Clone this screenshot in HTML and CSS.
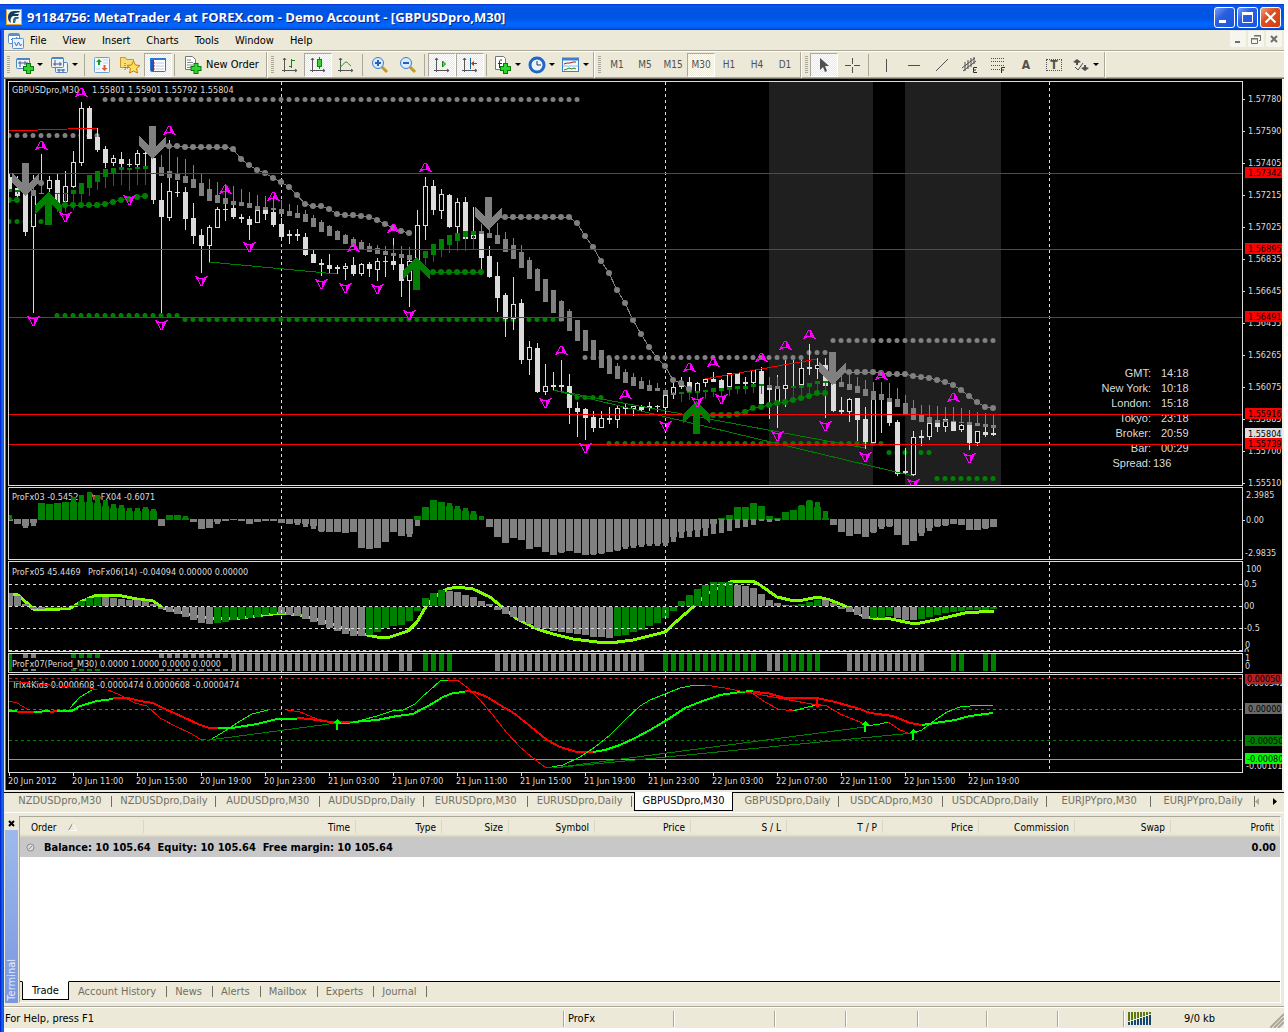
FILE: index.html
```html
<!DOCTYPE html>
<html lang="en">
<head>
<meta charset="utf-8">
<title>MetaTrader 4 at FOREX.com</title>
<link rel="stylesheet" href="styles.css">
</head>
<body>
<div class="window">
  <header class="titlebar">
    <svg class="app-icon" width="16" height="16" viewBox="0 0 16 16"><rect width="16" height="16" fill="#f0a030"/><rect x="1" y="1" width="14" height="14" fill="#f4f8f4"/><path d="M14 2H8C4 2 2 5 2 8s1 5 3 6c-1-4 0-6 2-7h5l1-2H8c1-1 3-1.500 5-1.500z" fill="#123c58"/><path d="M7 14c0-3 0-5 2-6h4l-1 2h-2l-1 4z" fill="#2a6a88"/></svg>
    <h1>91184756: MetaTrader 4 at FOREX.com - Demo Account - [GBPUSDpro,M30]</h1>
    <div class="caption-buttons">
      <button class="cap" aria-label="Minimize"><svg width="19" height="19"><rect x="4" y="12" width="7" height="3" fill="#fff"/></svg></button>
      <button class="cap" aria-label="Maximize"><svg width="19" height="19"><path d="M4.500 5v9.500h10V5" fill="none" stroke="#fff"/><rect x="4" y="4" width="11" height="3" fill="#fff"/></svg></button>
      <button class="cap cap-close" aria-label="Close"><svg width="19" height="19"><path d="M4.500 4.500l10 10M14.500 4.500l-10 10" stroke="#fff" stroke-width="2"/></svg></button>
    </div>
  </header>

  <nav class="menubar">
    <svg class="menu-icon" width="16" height="16" viewBox="0 0 16 16"><rect x=".5" y=".5" width="11" height="10" rx="1" fill="#fff" stroke="#5b8fd0"/><path d="M1 2h10" stroke="#5b8fd0" stroke-width="2"/><path d="M3 7l2-2 2 2 2-3" fill="none" stroke="#3a70c0"/><rect x="4.500" y="5.500" width="11" height="10" rx="1" fill="#eaf4ff" stroke="#5b8fd0"/><path d="M6.500 9l2 4 2-4 2 4 1-2" fill="none" stroke="#3a70c0"/></svg>
    <button>File</button><button>View</button><button>Insert</button><button>Charts</button><button>Tools</button><button>Window</button><button>Help</button>
    <div class="mdi-buttons">
      <button aria-label="Minimize chart"><svg width="14" height="14"><path d="M4 10h5" stroke="#716f64" stroke-width="2"/></svg></button>
      <button aria-label="Restore chart"><svg width="14" height="14"><path d="M5.500 4V3.500h6v5H10M2.500 6.500h6v5h-6z M5 4h7M2 7h7" fill="none" stroke="#716f64"/></svg></button>
      <button aria-label="Close chart"><svg width="14" height="14"><path d="M4 4l6 6M10 4l-6 6" stroke="#716f64" stroke-width="2"/></svg></button>
    </div>
  </nav>

  <div class="toolbars">
    <div class="toolbar">
      <button class="tool tool-drop" aria-label="New chart"><svg width="18" height="18"><rect x=".5" y="2.500" width="13" height="10" rx="1" fill="#eaf4ff" stroke="#4a86c8"/><path d="M1 3h13" stroke="#4a86c8" stroke-width="2"/><path d="M2 7h10M4 5v6M9 5v4" stroke="#557"/><path d="M12.500 7v11M7 12.500h11" stroke="#067a06" stroke-width="5"/><path d="M12.500 8v9M8 12.500h9" stroke="#2fd52f" stroke-width="3"/></svg></button>
      <button class="tool tool-drop" aria-label="Profiles"><svg width="18" height="18"><rect x="4.500" y="6.500" width="12" height="10" rx="1" fill="#eaf4ff" stroke="#4a86c8"/><path d="M6 14h8M8 13v3M12 13v3" stroke="#557"/><rect x=".5" y="1.500" width="12" height="10" rx="1" fill="#eaf4ff" stroke="#4a86c8"/><path d="M1 2h11" stroke="#4a86c8" stroke-width="2"/><path d="M2 8h9M4 4v6M9 6v4" stroke="#557"/></svg></button>
      <span class="sep"></span>
      <button class="tool" aria-label="Market Watch"><svg width="18" height="18"><rect x="1.500" y="1.500" width="15" height="15" rx="1" fill="#f2f8ff" stroke="#6aa0d8"/><path d="M10 4h5M10 7h5M3 13h4" stroke="#b8d4f0"/><path d="M6 3l3 3H7v3H5V6H3z" fill="#0aa50a"/><path d="M11.500 15l3-3h-2V9h-2v3h-2z" fill="#e05a28"/></svg></button>
      <button class="tool" aria-label="Navigator"><svg width="20" height="18"><path d="M.5 1.500h5l1 2h7v8h-13z" fill="#f8dc78" stroke="#c89820"/><path d="M5 7v8M5 12h4" stroke="#666" stroke-dasharray="1 1"/><path d="M13.500 5l2 4 4.500.5-3.500 3 1 4.500-4-2-4 2 1-4.500-3.500-3 4.500-.5z" fill="#ffe060" stroke="#c08010"/></svg></button>
      <button class="tool tool-on" aria-label="Terminal" aria-pressed="true"><svg width="18" height="16"><rect x="1.500" y="1.500" width="15" height="13" rx="1" fill="#fff" stroke="#2f78d0"/><path d="M1 2h16" stroke="#2f78d0" stroke-width="2"/><path d="M3.500 3v11" stroke="#2a50b0" stroke-width="3"/><path d="M7 6h8M7 9h8M7 12h8" stroke="#b8c8e8"/><path d="M5 6h1M5 9h1M5 12h1" stroke="#d02020"/></svg></button>
      <span class="sep"></span>
      <button class="tool tool-text"><svg width="18" height="18"><path d="M1.500.5h7l3 3v10h-10z" fill="#fff" stroke="#777"/><path d="M3 4h4M3 6.500h6M3 9h6M3 11.500h4" stroke="#888"/><path d="M12 7v11M6.500 12.500h11" stroke="#067a06" stroke-width="5"/><path d="M12 8v9M7.500 12.500h9" stroke="#2fd52f" stroke-width="3"/></svg>New Order</button>
    </div>
    <div class="toolbar">
      <button class="tool" aria-label="Bar chart"><svg width="16" height="16"><path d="M2.500 1v14M0 13.500h15M1 3l1.500-2L4 3M13 12l2 1.500-2 1.500" fill="none" stroke="#555"/><path d="M9.500 2v9M7 9.500h2M10 3.500h3" stroke="#0a8a0a"/></svg></button>
      <button class="tool tool-on" aria-label="Candlesticks" aria-pressed="true"><svg width="16" height="16"><path d="M2.500 1v14M0 13.500h15M1 3l1.500-2L4 3M13 12l2 1.500-2 1.500" fill="none" stroke="#555"/><path d="M9.500 0v12" stroke="#078a07"/><rect x="7.500" y="2.500" width="4" height="7" fill="#2fd52f" stroke="#078a07"/></svg></button>
      <button class="tool" aria-label="Line chart"><svg width="16" height="16"><path d="M2.500 1v14M0 13.500h15M1 3l1.500-2L4 3M13 12l2 1.500-2 1.500" fill="none" stroke="#555"/><path d="M2 10c3-1 4-5 6-5s3 3 5 4" fill="none" stroke="#2a9a2a"/></svg></button>
      <span class="sep"></span>
      <button class="tool" aria-label="Zoom in"><svg width="18" height="18"><path d="M11 11l5 5" stroke="#c89820" stroke-width="3"/><circle cx="7" cy="7" r="5.500" fill="#d8ecff" stroke="#3a7cd0"/><path d="M4 7h6M7 4v6" stroke="#2a60b0" stroke-width="2"/></svg></button>
      <button class="tool" aria-label="Zoom out"><svg width="18" height="18"><path d="M11 11l5 5" stroke="#c89820" stroke-width="3"/><circle cx="7" cy="7" r="5.500" fill="#d8ecff" stroke="#3a7cd0"/><path d="M4 7h6" stroke="#2a60b0" stroke-width="2"/></svg></button>
      <span class="sep"></span>
      <button class="tool tool-on" aria-label="Auto scroll" aria-pressed="true"><svg width="16" height="16"><path d="M2.500 1v14M0 13.500h15M1 3l1.500-2L4 3M13 12l2 1.500-2 1.500" fill="none" stroke="#555"/><path d="M8.500 4l3 3-3 3z" fill="#5be05b" stroke="#0a8a0a"/></svg></button>
      <button class="tool tool-on" aria-label="Chart shift" aria-pressed="true"><svg width="16" height="16"><path d="M2.500 1v14M0 13.500h15M1 3l1.500-2L4 3M13 12l2 1.500-2 1.500" fill="none" stroke="#555"/><path d="M8.500 1v11" stroke="#1a6090"/><path d="M9 6.500l3-2.500v2h3v1h-3v2z" fill="#b83010"/></svg></button>
      <span class="sep"></span>
      <button class="tool tool-drop tool-snug" aria-label="Indicators"><svg width="18" height="18"><path d="M1.500.5h8l2 2v11h-10z" fill="#fff" stroke="#777"/><path d="M8 4H6.500Q5.500 4 5.500 6v6M4 7.500h4" fill="none" stroke="#333"/><path d="M11.500 7v11M6 12.500h11" stroke="#067a06" stroke-width="5"/><path d="M11.500 8v9M7 12.500h9" stroke="#2fd52f" stroke-width="3"/></svg></button>
      <button class="tool tool-drop tool-snug" aria-label="Periods"><svg width="18" height="18"><circle cx="9" cy="9" r="7" fill="#eaf4ff" stroke="#1f66c8" stroke-width="3"/><path d="M9 5v4h4" fill="none" stroke="#333"/></svg></button>
      <button class="tool tool-drop tool-snug" aria-label="Templates"><svg width="18" height="16"><rect x=".5" y="1.500" width="16" height="13" fill="#f4faff" stroke="#3f80c8"/><path d="M0 2h17" stroke="#3f80c8" stroke-width="3"/><path d="M1 9h15" stroke="#9abce0"/><path d="M2 7l3-1 3 0 3-1 3 0" fill="none" stroke="#a02020"/><path d="M2 13l3-1 2-1 3 1 2-1 2 1" fill="none" stroke="#1a8a1a"/></svg></button>
    </div>
    <div class="toolbar">
      <button class="tool">M1</button><button class="tool">M5</button><button class="tool">M15</button><button class="tool tool-on" aria-pressed="true">M30</button><button class="tool">H1</button><button class="tool">H4</button><button class="tool">D1</button>
    </div>
    <div class="toolbar">
      <button class="tool tool-on" aria-label="Cursor" aria-pressed="true"><svg width="16" height="16"><path d="M4 1v12l3-3 2 5 2-1-2-5h4z" fill="#505050"/></svg></button>
      <button class="tool" aria-label="Crosshair"><svg width="16" height="16"><path d="M8.500 1v6M8.500 10v6M1 8.500h6M10 8.500h6" stroke="#505050"/></svg></button>
      <span class="sep"></span>
      <button class="tool" aria-label="Vertical line"><svg width="16" height="16"><path d="M8.500 2v13" stroke="#505050"/></svg></button>
      <button class="tool" aria-label="Horizontal line"><svg width="16" height="16"><path d="M2 8.500h12" stroke="#505050"/></svg></button>
      <button class="tool" aria-label="Trendline"><svg width="16" height="16"><path d="M2 14L14 2" stroke="#505050"/></svg></button>
      <button class="tool" aria-label="Channel"><svg width="18" height="18"><path d="M1 12L14 2M2 15L15 5M4 6v9M7 4v9M10 2v9M13 1v7" stroke="#505050"/><path d="M16 11.500h-3.500v5H16M12.500 14H15" fill="none" stroke="#303030"/></svg></button>
      <button class="tool" aria-label="Fibonacci"><svg width="18" height="18"><path d="M2 2.500h14M2 5.500h14M2 9.500h14M2 13.500h9" stroke="#505050" stroke-dasharray="1 1"/><path d="M16 11.500h-3.500v5.500M12.500 14H15" fill="none" stroke="#303030"/></svg></button>
      <button class="tool tool-letter">A</button>
      <button class="tool tool-letter tool-boxed">T</button>
      <button class="tool tool-drop" aria-label="Arrows"><svg width="18" height="16"><path d="M1 5l4-3 4 3-3 1v2H4V6zM9 11l4 3 4-3-3-1V8h-2v2z" fill="#505050"/><path d="M3 10l3 3 5-7" fill="none" stroke="#505050"/></svg></button>
    </div>
  </div>

  <main class="chart">
    <div class="pane pane-price"><svg class="plot" id="price-plot"></svg><svg class="axis" id="price-axis"></svg></div>
    <div class="pane pane-osc"><svg class="plot" id="osc-plot"></svg><svg class="axis" id="osc-axis"></svg></div>
    <div class="pane pane-trend"><svg class="plot" id="trend-plot"></svg><svg class="axis" id="trend-axis"></svg></div>
    <div class="pane pane-flags"><svg class="plot" id="flags-plot"></svg><svg class="axis" id="flags-axis"></svg></div>
    <div class="pane pane-trix"><svg class="plot" id="trix-plot"></svg><svg class="axis" id="trix-axis"></svg></div>
    <ol class="times">
      <li>20 Jun 2012</li><li>20 Jun 11:00</li><li>20 Jun 15:00</li><li>20 Jun 19:00</li><li>20 Jun 23:00</li><li>21 Jun 03:00</li><li>21 Jun 07:00</li><li>21 Jun 11:00</li><li>21 Jun 15:00</li><li>21 Jun 19:00</li><li>21 Jun 23:00</li><li>22 Jun 03:00</li><li>22 Jun 07:00</li><li>22 Jun 11:00</li><li>22 Jun 15:00</li><li>22 Jun 19:00</li>
    </ol>
  </main>

  <div class="chart-tabs">
    <button>NZDUSDpro,M30</button><button>NZDUSDpro,Daily</button><button>AUDUSDpro,M30</button><button>AUDUSDpro,Daily</button><button>EURUSDpro,M30</button><button>EURUSDpro,Daily</button><button class="current">GBPUSDpro,M30</button><button>GBPUSDpro,Daily</button><button>USDCADpro,M30</button><button>USDCADpro,Daily</button><button>EURJPYpro,M30</button><button>EURJPYpro,Daily</button>
    <div class="scrollers">
      <button aria-label="Scroll left"><svg width="5" height="7"><path d="M4 0v7L0 3.500z" fill="#aca899"/></svg></button>
      <button aria-label="Scroll right"><svg width="5" height="7"><path d="M1 0v7l4-3.500z" fill="#000"/></svg></button>
    </div>
  </div>

  <section class="terminal">
    <div class="terminal-side">
      <button aria-label="Close terminal"><svg width="7" height="7"><path d="M1 1l5 5M6 1L1 6" stroke="#000" stroke-width="2"/></svg></button>
      <div class="terminal-name"><span>Terminal</span></div>
    </div>
    <div class="terminal-main">
      <div class="orders">
        <table>
          <colgroup><col class="c-order"><col><col class="c-type"><col class="c-size"><col class="c-type"><col class="c-num"><col class="c-num"><col class="c-num"><col class="c-num"><col class="c-num"><col class="c-num"><col class="c-profit"></colgroup>
          <thead><tr><th>Order <svg width="9" height="8"><path d="M.5 7.500l4-7" stroke="#8c897a"/><path d="M4.500.5l4 7h-8" fill="none" stroke="#fff"/></svg></th><th>Time</th><th>Type</th><th>Size</th><th>Symbol</th><th>Price</th><th>S / L</th><th>T / P</th><th>Price</th><th>Commission</th><th>Swap</th><th>Profit</th></tr></thead>
          <tbody><tr><td colspan="11"><svg width="9" height="9"><circle cx="4.500" cy="4.500" r="3.500" fill="#ddd" stroke="#888"/><path d="M3 6l3-3" stroke="#888"/></svg>Balance: 10 105.64&nbsp; Equity: 10 105.64&nbsp; Free margin: 10 105.64</td><td>0.00</td></tr></tbody>
        </table>
      </div>
      <div class="terminal-tabs">
        <button class="current">Trade</button><button>Account History</button><button>News</button><button>Alerts</button><button>Mailbox</button><button>Experts</button><button>Journal</button>
      </div>
    </div>
  </section>

  <footer class="status">
    <span>For Help, press F1</span><span>ProFx</span><span></span><span></span><span></span><span></span><span></span><span></span>
    <span class="traffic"><svg width="24" height="13"><path d="M1 0v9M4 0v8M7 0v7M10 0v6M13 0v5M16 0v4M19 0v3M22 0v2" stroke="#5a7a10" stroke-width="2"/><path d="M1 13v-3M4 13v-4M7 13v-5M10 13v-6M13 13v-7M16 13v-8M19 13v-9M22 13v-10" stroke="#104870" stroke-width="2"/></svg>9/0 kb</span>
    <svg class="size-grip" width="14" height="15"><path d="M0 15L14 1M4 15L14 5M8 15L14 9" stroke="#aca899" stroke-width="2"/></svg>
  </footer>
</div>
<script src="chart.js"></script>
</body>
</html>
```

FILE: styles.css
```css
* { box-sizing: border-box; }

body {
  margin: 0;
  padding: 4px 4px 0 0;
  min-height: 100vh;
  display: flex;
  background: #fff;
  color: #000;
  font: 11px/14px "DejaVu Sans Condensed", "Liberation Sans", sans-serif;
}

button {
  margin: 0;
  padding: 0;
  border: 0;
  background: none;
  color: inherit;
  font: inherit;
}

svg { display: block; flex: none; }

.window {
  flex: 1;
  min-width: 0;
  display: flex;
  flex-direction: column;
  padding: 0 0 4px 4px;
  background: linear-gradient(90deg, #0019cf 0, #0831d9 1px, #166aee 2px, #0855dd 4px, #fff 4px);
}

.titlebar {
  display: flex;
  align-items: center;
  height: 26px;
  margin-left: -4px;
  padding: 0 3px 0 6px;
  background: linear-gradient(#0831d9 0, #0a5ae8 2px, #0054e3 6px, #0055e5 14px, #0066ff 20px, #0062f8 23px, #0040c8 26px);
}
.titlebar h1 {
  flex: 1;
  margin: 0 0 0 5px;
  color: #fff;
  font: bold 13px/18px "Open Sans", "Liberation Sans", sans-serif;
  text-shadow: 1px 1px #0a1f80;
  white-space: nowrap;
}
.caption-buttons { display: flex; gap: 2px; }
.cap {
  width: 21px;
  height: 21px;
  border: 1px solid #fff;
  border-radius: 3px;
  background: linear-gradient(135deg, #7ba0f4, #2a5ee0 40%, #1c55dc);
}
.cap-close { background: linear-gradient(135deg, #f0a080, #dc5020 40%, #d04010); }

.menubar {
  display: flex;
  align-items: center;
  height: 22px;
  padding-left: 4px;
  background: #ece9d8;
  border-bottom: 1px solid #fff;
  box-shadow: inset 0 -1px #aca899;
}
.menu-icon { margin-right: -2px; }
.menubar > button { padding: 0 8px; }
.mdi-buttons { display: flex; gap: 2px; margin: 0 2px 3px auto; }
.mdi-buttons button { width: 16px; height: 16px; padding: 1px; background: #f6f5ee; }

.toolbars {
  display: flex;
  height: 26px;
  background: #ece9d8;
  box-shadow: inset 0 -1px #aca899;
  color: #505050;
  font-size: 10px;
}
.toolbar {
  display: flex;
  align-items: center;
  padding: 0 1px 1px 0;
  border-right: 1px solid #aca899;
  box-shadow: 1px 0 #fff;
}
.toolbar + .toolbar { margin-left: 1px; }
.toolbar::before {
  content: "";
  width: 3px;
  height: 18px;
  margin: 0 2px 0 3px;
  background: repeating-linear-gradient(#aca899 0, #aca899 1px, #ece9d8 1px, #ece9d8 2px);
}
.tool {
  display: flex;
  align-items: center;
  justify-content: center;
  width: 28px;
  height: 24px;
  border: 1px solid transparent;
}
.tool-drop { width: 35px; gap: 3px; }
.tool-snug { width: 34px; }
.tool-drop::after {
  content: "";
  border: 3px solid transparent;
  border-top-color: #000;
  border-bottom: 0;
}
.tool-on {
  background: repeating-conic-gradient(#fff 0 25%, #ece9d8 0 50%) 0 0 / 2px 2px;
  border-color: #aca899 #fff #fff #aca899;
}
.tool-text { width: 87px; gap: 4px; color: #000; font-size: 11px; }
.tool-letter { font-weight: bold; font-size: 12px; }
.tool-boxed { outline: 1px dotted #505050; outline-offset: -7px; }
.sep { width: 1px; height: 22px; margin: 0 3px 0 2px; background: #aca899; }

.chart {
  display: flex;
  flex-direction: column;
  gap: 1px;
  padding: 2px 2px 0 4px;
  background: #000;
  color: #dcdcdc;
  border-top: 1px solid #716f64;
  box-shadow: inset 1px 0 #ece9d8, inset 2px 0 #716f64, inset -2px 0 #f1efe2;
  font-size: 9px;
  line-height: 10px;
}
.pane { display: flex; }
.plot { flex: 1 1 0; min-width: 0; height: 100%; border: 1px solid #dcdcdc; }
.axis { width: 39px; height: 100%; }
.pane-price { height: 405px; }
.pane-osc { height: 73px; }
.pane-trend { height: 91px; }
.pane-flags { height: 20px; }
.pane-trix { height: 99px; }
.chart text { font-size: 9px; fill: #dcdcdc; white-space: pre; }
.chart .clock { font: 11px "Liberation Sans", sans-serif; }
.chart .on-tag { fill: #000; }
.times {
  display: flex;
  height: 17px;
  margin: -1px 0 0;
  padding: 0 0 0 1px;
  list-style: none;
}
.times li {
  flex: none;
  width: 64px;
  padding-top: 3px;
  text-indent: -1px;
  white-space: nowrap;
  background: linear-gradient(#dcdcdc, #dcdcdc) 0 0 / 1px 3px no-repeat;
}

.chart-tabs {
  display: flex;
  align-items: center;
  height: 23px;
  padding: 2px 2px 2px 4px;
  background: #ece9d8;
  border-bottom: 1px solid #fff;
  box-shadow: inset 0 2px #ece9d8, inset 0 3px #000;
  color: #716f64;
}
.chart-tabs > button { position: relative; width: 104px; height: 19px; white-space: nowrap; }
.chart-tabs > button::after {
  content: "";
  position: absolute;
  right: 0;
  top: 4px;
  height: 11px;
  border-right: 1px solid #716f64;
}
.chart-tabs > .current {
  width: 100px;
  margin: 0 2px;
  background: #fff;
  color: #000;
  border: 1px solid #000;
  border-top: 0;
}
.chart-tabs > .current::after { display: none; }
.scrollers { display: flex; gap: 12px; margin: 0 5px 0 auto; }

.terminal {
  flex: 1;
  display: flex;
  padding: 3px 3px 3px 1px;
  background: #ece9d8;
}
.terminal-side { display: flex; flex-direction: column; width: 13px; margin-right: 1px; }
.terminal-side button { height: 14px; padding: 2px 3px; }
.terminal-name {
  flex: 1;
  display: flex;
  align-items: flex-end;
  background: linear-gradient(#9db9ec, #7a96df);
  color: #e4ecfb;
}
.terminal-name span { writing-mode: vertical-rl; transform: rotate(180deg); padding-top: 2px; }
.terminal-main {
  flex: 1;
  min-width: 0;
  display: flex;
  flex-direction: column;
  border: 1px solid #aca899;
  border-color: #aca899 #fff #fff #aca899;
}
.orders { flex: 1; background: #fff; border-bottom: 1px solid #000; }
.orders table { width: 100%; table-layout: fixed; border-collapse: collapse; }
.c-order { width: 124px; }
.c-type { width: 86px; }
.c-size { width: 67px; }
.c-num { width: 96px; }
.c-profit { width: 109px; }
.orders th {
  height: 20px;
  padding: 2px 6px 0;
  font-weight: normal;
  font-size: 10px;
  text-align: right;
  background: linear-gradient(90deg, #ece9d8, #c9c5b0) right 3px / 1px 13px no-repeat, linear-gradient(#ece9d8 17px, #d2cfbb 20px);
}
.orders th:first-child { text-align: left; padding-left: 11px; }
.orders th svg { display: inline-block; margin-left: 9px; }
.orders td { height: 20px; padding: 2px 4px 0; background: #c8c8c8; font-weight: bold; }
.orders td:last-child { text-align: right; }
.orders td svg { display: inline-block; margin: 0 9px 0 2px; vertical-align: -1px; }
.terminal-tabs { display: flex; height: 20px; padding-left: 2px; color: #716f64; }
.terminal-tabs button { position: relative; height: 18px; padding: 2px 11px 0 8px; }
.terminal-tabs button::after {
  content: "";
  position: absolute;
  right: 0;
  top: 4px;
  height: 11px;
  border-right: 1px solid #716f64;
}
.terminal-tabs .current {
  height: 19px;
  margin: -1px 1px 0 0;
  padding: 0 9px;
  background: #fff;
  color: #000;
  border: 1px solid #000;
  border-top-color: #fff;
}
.terminal-tabs .current::after { display: none; }

.status {
  display: grid;
  grid-template-columns: 1fr 110px 101px 71px 72px 69px 71px 66px 147px 14px;
  align-items: center;
  height: 22px;
  padding-top: 2px;
  background: #ece9d8;
  border-top: 1px solid #aca899;
  box-shadow: inset 0 1px #fff;
}
.status span { height: 16px; padding: 1px 4px; border-left: 1px solid #aca899; box-shadow: inset 1px 0 #fff; }
.status span:first-child { padding-left: 1px; border: 0; box-shadow: none; }
.status .traffic { display: flex; gap: 32px; }
.size-grip { align-self: end; }
```

FILE: chart.js
```js
const GRAY = '#808080', GREEN = '#008000', PALE = '#dcdcdc', RED = '#ff0000', LIME = '#00ff00', PINK = '#ff00ff';
const PLOT_LEFT = 9, AXIS_LEFT = 1243, STEP = 8;
const barX = i => PLOT_LEFT + STEP * i;

const rect = (x, y, w, h, fill) => `<rect x="${x}" y="${y}" width="${w}" height="${h}" fill="${fill}"/>`;
const text = (x, y, s, extra = '') => `<text x="${x}" y="${y}" ${extra}>${s}</text>`;
const line = (points, color, width = 1) =>
  `<polyline points="${points.join(' ')}" fill="none" stroke="${color}" stroke-width="${width}"/>`;
const level = (y, color) => rect(0, y, 3000, 1, color);
const dashed = (y, color) => `<path d="M9 ${y}.5H3000" stroke="${color}" stroke-dasharray="3 3"/>`;
const dayLines = () => [281, 665, 1049]
  .map(x => `<path d="M${x}.5 82V772" stroke="${PALE}" stroke-dasharray="3 3"/>`).join('');

function draw(id, left, top, parts) {
  document.getElementById(id).innerHTML =
    `<g transform="translate(${-left},${-top})" shape-rendering="crispEdges">${parts.flat().join('')}</g>`;
}

/* Candles: high, low, body top, body bottom, hollow flag */
const candles = [
[174,192,177,189,0],[176,198,188,196,0],[190,236,194,232,0],[175,313,191,227,1],[154,190,183,184,0],[176,192,180,189,1],[174,204,180,204,0],[171,204,186,202,1],
[151,188,162,187,1],[102,166,108,163,1],[106,139,108,139,0],[128,152,137,150,0],[146,168,149,163,0],[155,166,158,163,1],[152,169,159,164,0],[159,167,164,165,0],
[150,167,153,165,1],[151,166,153,154,0],[153,204,158,200,0],[183,313,200,217,0],[140,221,191,218,1],[181,197,192,193,0],[187,230,192,219,0],[203,244,218,236,0],
[229,273,235,246,0],[225,262,227,246,1],[207,228,209,228,1],[204,221,209,210,0],[205,219,208,217,0],[214,223,217,219,0],[216,240,219,225,0],[206,223,210,223,1],
[206,220,210,214,0],[206,227,212,225,0],[218,239,224,237,0],[230,244,234,236,1],[229,241,234,236,0],[233,256,237,255,0],[250,263,254,263,0],[259,276,263,265,0],
[254,273,265,269,0],[265,274,267,269,0],[263,280,266,269,1],[257,276,265,274,0],[263,276,264,274,1],[262,277,264,269,0],[258,281,261,270,1],[256,277,261,262,0],
[238,270,261,265,0],[246,297,264,281,0],[256,307,261,281,1],[210,262,225,262,1],[177,240,186,226,1],[180,215,186,210,0],[189,219,194,211,1],[194,228,195,227,0],
[198,233,202,227,1],[197,239,202,239,0],[207,239,235,239,1],[224,269,232,258,0],[246,278,256,277,0],[262,312,276,298,0],[293,337,295,319,0],[277,330,304,319,1],
[299,364,303,360,0],[341,375,347,360,1],[343,393,348,392,0],[364,395,386,392,1],[372,390,385,387,0],[360,391,385,387,0],[374,424,386,408,0],[402,437,408,412,0],
[408,440,409,418,0],[411,432,417,428,0],[411,428,418,428,1],[407,424,418,420,0],[406,428,408,420,1],[404,414,407,409,0],[406,416,406,409,1],[405,411,407,410,0],
[402,411,406,408,0],[405,412,406,407,0],[390,412,395,408,1],[379,399,387,395,1],[377,389,383,387,0],[377,390,382,390,0],[382,392,383,392,1],[379,387,379,383,1],
[372,382,379,382,0],[379,388,380,388,0],[373,387,373,387,1],[373,384,373,384,0],[377,386,382,384,0],[370,384,370,383,1],[367,404,371,404,0],[387,419,388,390,0],
[375,428,388,402,1],[360,407,385,389,1],[360,387,386,387,0],[360,387,368,385,1],[344,375,367,369,0],[358,379,365,369,1],[358,418,365,386,0],[380,412,384,411,0],
[397,414,410,412,0],[398,422,399,412,1],[398,441,398,420,0],[407,449,419,442,0],[399,443,399,443,1],[390,433,395,397,0],[402,426,402,423,0],[420,476,422,474,0],
[448,475,471,473,1],[431,476,437,475,1],[430,446,436,438,0],[418,440,423,437,1],[422,432,422,427,0],[419,432,419,427,1],[419,431,421,431,0],[424,432,425,430,1],
[425,450,425,443,0],[431,446,431,443,1],[427,437,432,435,0],[428,436,433,435,0]];

function candle([high, low, top, bottom, hollow], i) {
  const x = barX(i);
  return rect(x, high, 1, low - high, PALE) + rect(x - 2, top, 5, Math.max(1, bottom - top), PALE) +
    (hollow && bottom - top > 2 ? rect(x - 1, top + 1, 3, bottom - top - 2, '#000') : '');
}

/* Trend bodies: first bar, colour, then [body top, body bottom, wick end] per bar */
const trendRuns = [
[0,GREEN,[[189,192,192],[190,192,194]]],
[3,GRAY,[[190,196,186],[193,194,186]]],
[6,GREEN,[[193,194,212],[193,194,212],[190,194,210],[183,194,203],[175,188,196],[171,182,190],[169,177,188],[168,173,186],[167,170,185],[168,170,191],[167,169,185],[166,169,185]]],
[19,GRAY,[[167,176,155],[171,178,146],[173,180,157],[176,183,159],[179,188,165],[183,196,174],[189,201,179],[195,203,182],[198,204,184],[201,205,186],[202,206,189],[203,208,192],[206,210,195],[207,210,196],[208,210,196],[209,214,200],[211,216,204],[213,218,205],[214,222,210],[218,227,215],[222,232,220],[226,236,225],[231,240,230],[235,244,234],[239,247,237],[242,249,240],[246,252,243],[248,254,245],[251,255,246],[253,256,245],[254,258,246],[255,260,247]]],
[52,GREEN,[[251,258,265],[244,255,262],[239,249,257],[235,245,253],[233,241,251],[231,237,251],[231,235,249]]],
[59,GRAY,[[231,234,224],[233,238,224],[235,244,223],[239,252,232],[245,259,238],[252,268,245],[260,279,257],[269,291,268],[279,302,279],[290,313,290],[301,321,300],[311,331,309],[320,341,320],[330,351,330],[340,360,340],[350,368,350],[358,374,358],[366,379,363],[372,383,369],[377,386,373],[381,389,377],[385,391,380],[388,391,383],[390,395,388],[393,395,392]]],
[84,GREEN,[[392,394,402],[391,393,400],[391,393,400],[390,392,399],[388,392,397],[388,391,397],[387,390,396],[386,389,394],[386,389,394],[384,387,393],[384,386,394]]],
[95,GRAY,[[385,388,377],[386,389,377]]],
[98,GREEN,[[386,388,397],[385,388,396],[383,387,394],[381,384,393],[381,383,392]]],
[103,GRAY,[[380,384,376],[382,387,376],[384,390,375],[386,393,377],[389,396,380],[391,400,382],[394,400,382],[398,402,383],[399,407,388],[403,414,395],[408,420,400],[415,422,405],[417,423,405],[420,423,406],[420,422,407],[421,422,407],[422,423,408],[422,425,410],[423,426,412],[424,427,413],[425,428,415]]]];
const trendBodies = trendRuns.flatMap(([first, color, bars]) => bars.map(([top, bottom, wick], k) => {
  const x = barX(first + k);
  return rect(x - 2, top, 5, bottom - top, color) +
    rect(x, Math.min(top, wick), 1, Math.max(bottom, wick) - Math.min(top, wick), color);
}));

/* Flat support and resistance dots: first bar, last bar, y, colour */
const dotRows = [[12,71,99,GRAY],[0,11,135,GRAY],[0,4,221,GREEN],[6,21,315,GREEN],[22,69,319,GREEN],[72,99,357,GRAY],[100,102,352,GRAY],[103,123,340,GRAY],[70,74,397,GREEN],[75,109,443,GREEN],[110,115,452,GREEN],[116,123,478,GREEN]];
const dot = (x, y, r, color) => `<circle cx="${x}" cy="${y}" r="${r}" fill="${color}" shape-rendering="auto"/>`;
const dots = dotRows.flatMap(([a, b, y, color]) =>
  Array.from({ length: b - a + 1 }, (_, k) => dot(barX(a + k), y + 0.5, 2.5, color)));

/* Trailing stops, joined by a line */
const stops = [
[0,GREEN,[200,200]],[4,GRAY,[183]],[7,GREEN,[205,205,205,205,205,204,202,200,199,197,196]],
[19,GRAY,[146,146,146,147,147,147,147,147,147,149,159,165,170,173,178,182,187,195,204,206,206,209,214,215,215,216,217,220,224,228,231,233]],
[53,GREEN,[272,272,272,272,272,272,272]],
[61,GRAY,[217,217,217,217,217,217,217,217,217,217,223,236,247,261,273,290,303,320,334,347,358,366,380,383,389]],
[87,GREEN,[415,415,415,415,414,412,408,407,405,403,402,400,398,396,393,393]],
[104,GRAY,[372,372,372,372,372,373,374,374,374,376,377,378,380,382,385,390,396,402,407,408]]];
const stopLines = stops.flatMap(([first, color, ys]) => [
  line(ys.map((y, k) => `${barX(first + k)},${y}`), color),
  ...ys.map((y, k) => dot(barX(first + k), y, 3, color))]);

const bigDown = (x, y) => `<path transform="translate(${x},${y})" d="M-3 0H4V20L14 10V19L.5 33L-13 19V10L-3 20Z" fill="${GRAY}"/>`;
const bigUp = (x, y) => `<path transform="translate(${x},${y})" d="M-3 33H4V13L14 22V13L.5 0L-13 13V22L-3 13Z" fill="${GREEN}"/>`;
const fractal = (x, y, flip) => `<g transform="translate(${x},${y}) scale(1,${flip})"><path d="M-5.500 4L-1 -4.500H1L5.500 4L2 2H-2Z" fill="none" stroke="${PINK}"/><path d="M0 -5H1L4 3L2 2H0Z" fill="${PINK}"/></g>`;
const fractalsUp = [[41,145],[81,92],[169,130],[225,189],[273,196],[353,247],[393,228],[425,167],[561,350],[625,394],[689,367],[713,362],[761,357],[785,345],[809,334],[881,375],[953,397]];
const fractalsDown = [[33,320],[65,216],[129,199],[161,324],[201,280],[249,246],[321,283],[345,287],[377,288],[409,314],[545,402],[585,447],[665,425],[697,401],[721,398],[777,435],[825,425],[865,456],[913,483],[969,457]];

const clocks = [['GMT:','14:18'],['New York:','10:18'],['London:','15:18'],['Tokyo:','23:18'],['Broker:','20:59'],['Bar:','00:29']];
const clockText = clocks.map(([name, time], k) =>
  text(1151, 377 + 15 * k, name, 'class="clock" text-anchor="end"') + text(1161, 377 + 15 * k, time, 'class="clock"')).join('') +
  text(1151, 467, 'Spread:', 'class="clock" text-anchor="end"') + text(1153, 467, '136', 'class="clock"');

draw('price-plot', PLOT_LEFT, 82, [
  rect(769, 82, 104, 403, '#1f1f1f'), rect(905, 82, 96, 403, '#1f1f1f'),
  dayLines(), dots, candles.map(candle), trendBodies, stopLines,
  line(['9,131', '97,128'], RED), line(['705,379', '817,359'], RED),
  line(['209,262', '337,274'], GREEN), line(['553,390', '865,448'], GREEN), line(['553,390', '913,476'], GREEN),
  clockText,
  [173, 249, 317, 414, 444].map(y => level(y, RED)),
  [[25,163],[152,126],[488,197],[832,352]].map(p => bigDown(...p)),
  [[48,192],[416,257],[696,401]].map(p => bigUp(...p)),
  fractalsUp.map(([x, y]) => fractal(x + 0.5, y + 0.5, 1)), fractalsDown.map(([x, y]) => fractal(x + 0.5, y + 0.5, -1)),
  text(12, 93, 'GBPUSDpro,M30') + text(92, 93, '1.55801 1.55901 1.55792 1.55804')]);

const tag = (y, label, fill, cls = 'on-tag', x = 1248) => rect(1245, y - 5, 60, 11, fill) + text(x, y + 4, label, `class="${cls}"`);
const prices = ['1.57780','1.57590','1.57405','1.57215','1.57025','1.56835','1.56645','1.56455','1.56265','1.56075','1.55885','1.55700','1.55510'];
draw('price-axis', AXIS_LEFT, 81, [
  prices.map((p, k) => rect(1243, 99 + 32 * k, 2, 1, PALE) + text(1248, 102 + 32 * k, p)),
  [[173,'1.57342'],[249,'1.56895'],[317,'1.56491'],[414,'1.55916']].map(([y, p]) => tag(y - 1, p, RED)),
  tag(433, '1.55804', PALE), tag(443, '1.55739', RED)]);

/* Oscillator: wide bars for the slow value, narrow ones for the fast value */
const slow = [-2,-5,-7,-4,17,16,17,18,18,18,18,17,14,12,12,9,9,11,9,-7,5,5,2,-3,-10,-9,-3,-2,-1,-2,-5,-3,-2,-2,-4,-5,-4,-5,-7,-12,-13,-13,-14,-13,-29,-30,-29,-23,-13,-17,-15,0,13,20,18,14,11,9,6,0,-8,-18,-24,-19,-21,-30,-28,-33,-36,-33,-32,-34,-36,-35,-34,-33,-31,-28,-27,-26,-25,-25,-24,-18,-13,-12,-11,-9,-5,2,5,13,13,17,14,4,2,8,10,14,19,13,2,-6,-13,-17,-15,-18,-13,-8,-7,-16,-26,-22,-14,-9,-7,-6,-5,-6,-11,-11,-9,-8];
const fast = {0:5,2:-9,3:-7,8:23,9:25,10:28,11:25,12:20,13:16,14:15,15:12,16:12,17:13,18:11,22:4,26:-5,36:-6,37:-8,38:-10,39:-13,50:-18,51:-7,55:17,56:14,57:12,58:9,59:4,69:-34,73:-36,74:-35,76:-32,77:-30,78:-29,79:-28,80:-27,81:-27,82:-27,83:-23,84:-19,85:-18,86:-18,87:-17,88:-15,89:-14,90:-12,91:-9,92:-8,93:-6,94:-2,95:-3,96:-2,99:15,100:20,101:18,102:9,108:-14,109:-10,110:-8,114:-17,115:-12,116:-8,117:-7,122:-10};
const column = (i, v, zero, w, color) => rect(barX(i) - (w - 1) / 2, v > 0 ? zero - v : zero, w, Math.abs(v), color);
draw('osc-plot', PLOT_LEFT, 488, [
  text(12, 500, 'ProFx03 -0.5452') + text(88, 500, 'ProFX04 -0.6071'), dayLines(),
  slow.map((v, i) => column(i, v, v > 0 ? 520 : 519, 7, v > 0 ? GREEN : GRAY)),
  Object.entries(fast).map(([i, v]) => column(+i, v, v > 0 ? 520 : 519, 5, v > 0 ? GREEN : GRAY)),
  column(51, 4, 520, 7, GREEN)]);
draw('osc-axis', AXIS_LEFT, 487, [text(1246, 498, '2.3985'), text(1246, 523, '0.00'), text(1245, 556, '-2.9835'), rect(1243, 520, 2, 1, PALE)]);

/* Momentum histogram; bars listed in rising are green */
const momentum = [13,10,2,-2,-2,-1,-1,-1,1,5,8,9,9,8,7,6,6,5,2,-2,-5,-7,-10,-13,-16,-17,-16,-15,-13,-12,-11,-10,-8,-7,-7,-8,-9,-12,-15,-18,-21,-24,-27,-29,-29,-28,-25,-21,-19,-18,-14,-4,8,13,16,15,14,11,9,5,2,-3,-7,-10,-14,-17,-21,-22,-24,-25,-26,-27,-28,-30,-30,-31,-29,-28,-25,-23,-19,-16,-11,-4,5,11,17,21,24,24,24,21,20,18,12,6,3,1,1,2,4,6,6,3,-2,-5,-8,-12,-11,-11,-9,-11,-13,-13,-12,-10,-8,-6,-5,-4,-3,-3,-3,-2];
const rising = [[5,11],[26,33],[45,54],[76,90],[98,101],[108,110],[114,123]];
const inRuns = (runs, i) => runs.some(([a, b]) => i >= a && i <= b);
const curve = '9,594 13,594 18,595 27,603 33,609 42,610 60,609 71,608 80,602 97,595 117,595 137,599 153,601 163,608 183,613 200,617 217,619 240,618 263,615 283,613 300,615 320,620 340,627 367,635 377,637 390,637 408,631 417,622 425,608 430,602 437,595 447,589 457,587 473,589 490,597 502,607 517,619 537,629 553,634 573,639 597,642 610,643 633,640 665,632 677,621 693,607 710,592 730,582 753,581 760,585 777,597 790,600 803,600 818,597 830,600 845,606 855,611 861,615 873,618 891,619 905,622 915,624 935,620 965,613 994,611'.split(' ');
draw('trend-plot', PLOT_LEFT, 562, [
  line(curve, '#80ff00', 3),
  momentum.map((v, i) => column(i, v, v > 0 ? 606 : 607, 7, inRuns(rising, i) ? GREEN : GRAY)),
  dayLines(), [584, 606, 628, 650].map(y => dashed(y, PALE)),
  text(12, 575, 'ProFx05 45.4469') + text(88, 575, 'ProFx06(14) -0.04094 0.00000 0.00000')]);
draw('trend-axis', AXIS_LEFT, 561, [text(1246, 572, '100'), text(1244, 587, '0.5'), text(1244, 609, '00'), text(1244, 631, '-0.5'), text(1245, 648, '0'), text(1244, 655, '0.')]);

const grayFlags = [[2,3],[19,47],[49,50],[61,79],[95,96],[105,114]];
const greenFlags = [[0,0],[8,11],[52,55],[82,93],[97,101],[118,119],[122,123]];
const flags = (runs, color) => runs.flatMap(([a, b]) =>
  Array.from({ length: b - a + 1 }, (_, k) => rect(barX(a + k) - 2, 654, 5, 17, color)));
draw('flags-plot', PLOT_LEFT, 654, [
  dayLines(), flags(grayFlags, GRAY), flags(greenFlags, GREEN), rect(12, 658, 220, 11, '#000'),
  text(12, 667, 'ProFx07(Period_M30) 0.0000 1.0000 0.0000 0.0000')]);
draw('flags-axis', AXIS_LEFT, 653, [text(1245, 661, '1'), text(1245, 669, '0')]);

const signal = [
[LIME,'9,711 17,711'],[RED,'17,712 34,712'],[LIME,'34,712 50,711'],[RED,'50,712 57,711'],[LIME,'57,711 72,711 80,706 97,701 113,699'],
[RED,'113,698 128,698 140,701 153,703 165,709 183,717 200,725 210,728 218,728'],[LIME,'218,728 232,728 257,724 277,719 297,719'],[RED,'297,718 310,719 330,722 353,722'],
[LIME,'353,722 377,720 397,716 413,714 422,709 430,705 443,697 453,693 465,692'],[RED,'465,691 475,692 487,697 500,705 515,714 530,726 547,740 560,747 577,752 593,752'],
[LIME,'593,752 605,750 620,745 635,738 650,730 667,720 685,708 700,702 720,695 740,692 753,691'],[RED,'753,692 767,693 785,698 817,698 835,702 860,709 870,713 893,716 910,723 922,725'],[LIME,'922,725 935,723 955,720 970,716 993,713']];
const trix = [
[RED,'9,701 17,703 27,709'],[RED,'9,681 40,684 70,687 90,688 97,690'],[LIME,'70,708 80,697 92,690'],[RED,'108,690 120,695 135,703 147,706 160,718 175,726 190,733 200,739 206,740'],
[LIME,'210,740 225,731 240,721 252,714 268,710'],[RED,'287,710 300,712 317,719 332,722'],[LIME,'332,723 350,723 362,720 377,716 392,711 403,710 415,704 422,697 430,690 440,681 448,680'],
[RED,'448,680 457,680 468,688 480,700 492,714 507,733 520,747 533,758 545,767 552,767'],[LIME,'552,767 563,765 580,757 595,747 610,735 625,720 640,706 650,700 665,694 680,688 690,686 705,685'],
[RED,'705,685 725,688 740,691 752,693 765,702 778,709 793,711'],[LIME,'793,711 808,707 817,705'],[RED,'817,705 827,706 840,714 860,722 864,725'],[LIME,'866,726 880,724 888,722'],[RED,'888,722 900,730 908,733'],
[LIME,'912,733 922,730 935,720 947,712 960,707 970,706 993,705'],[RED,'740,691 817,705'],[GREEN,'209,740 337,723'],[GREEN,'553,768 865,727'],[GREEN,'553,768 913,733']];
const mark = (x, y, flip, color) => `<path transform="translate(${x},${y}) scale(1,${flip})" d="M-1 5V-2H-4L0 -6L4 -2H1V5Z" fill="${color}"/>`;
draw('trix-plot', PLOT_LEFT, 675, [
  dayLines(), dashed(678, '#b22222'), dashed(709, '#696969'), dashed(740, GREEN), level(759, LIME),
  text(12, 688, 'Trix4Kids 0.0000608 -0.0000474 0.0000608 -0.0000474'),
  signal.map(([color, pts]) => line(pts.split(' '), color, 2)),
  trix.map(([color, pts]) => line(pts.split(' '), color)),
  mark(337, 725, 1, LIME), mark(865, 727, 1, LIME), mark(913, 735, 1, LIME), mark(817, 702, -1, RED)]);
draw('trix-axis', AXIS_LEFT, 674, [
  text(1246, 686, '0.000542'), tag(678, '0.00050', '#b22222', 'on-tag', 1247), tag(708, '0.00000', '#696969', 'on-tag', 1248),
  text(1246, 769, '-0.00101'), tag(740, '-0.00050', GREEN, 'on-tag', 1247), tag(758, '-0.00080', LIME, 'on-tag', 1247)]);
```
